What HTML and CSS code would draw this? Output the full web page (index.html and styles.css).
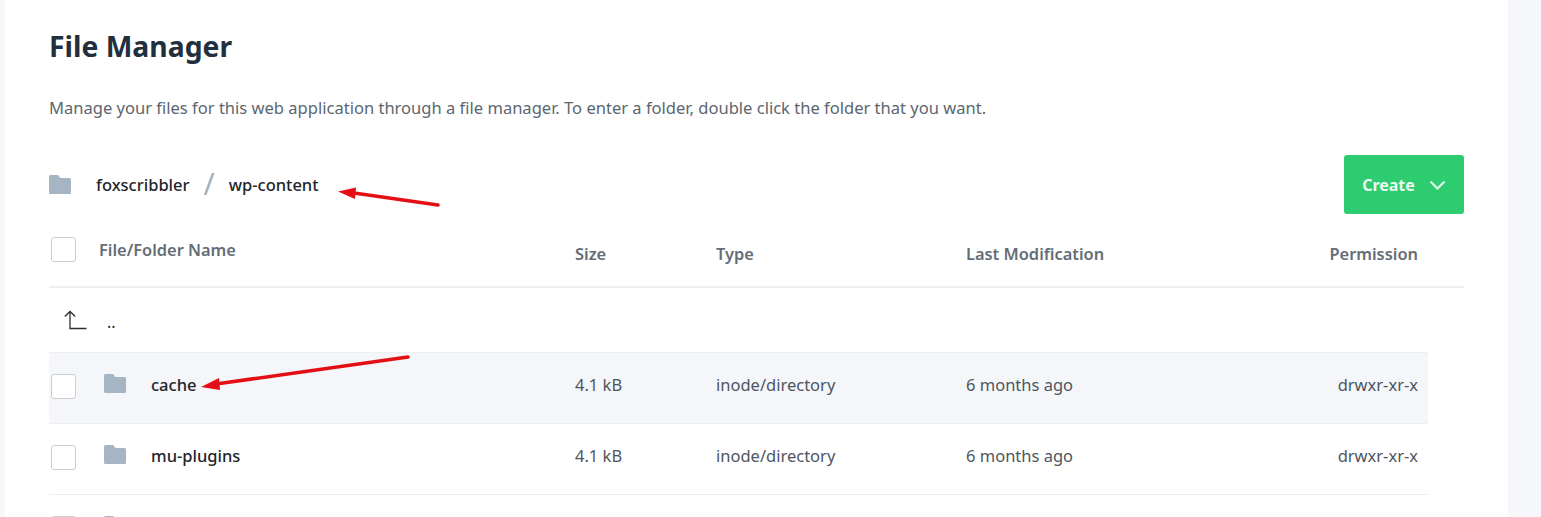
FILE: index.html
```html
<!DOCTYPE html>
<html lang="en">
<head>
    <meta charset="UTF-8">
    <title>File Manager</title>
    <link rel="stylesheet" href="styles.css">
</head>
<body>

<svg width="0" height="0" class="defs">
    <symbol id="folder" viewBox="0 0 22 19">
        <path d="M1.500 0H9l2.500 3H20.500a1.500 1.500 0 0 1 1.500 1.500V17.500a1.500 1.500 0 0 1-1.500 1.500H1.500A1.500 1.500 0 0 1 0 17.500V1.500A1.500 1.500 0 0 1 1.500 0z"/>
    </symbol>
</svg>

<div class="card">
    <h1>File Manager</h1>
    <p class="intro">Manage your files for this web application through a file manager. To enter a folder, double click the folder that you want.</p>

    <div class="toolbar">
        <div class="crumbs">
            <svg class="folder crumb-folder"><use href="#folder"/></svg>
            <span>foxscribbler</span>
            <span class="slash">/</span>
            <span>wp-content</span>
        </div>
        <button class="create">Create
            <svg width="17" height="10" viewBox="0 0 17 10"><path d="M1.500 1.500l7 7 7-7" fill="none" stroke="#d8f5e3" stroke-width="2.400"/></svg>
        </button>
    </div>

    <div class="head">
        <div class="head-name">
            <span class="check"></span>
            <span class="name-label">File/Folder Name</span>
        </div>
        <div class="grid-cols">
            <span>Size</span>
            <span>Type</span>
            <span>Last Modification</span>
            <span class="perm">Permission</span>
        </div>
    </div>

    <div class="up-row">
        <svg width="24" height="20" viewBox="0 0 24 20"><path d="M6 1.500V18.500H22.500M0.800 6.500L6 1.500l5.200 5" fill="none" stroke="#2a2f35" stroke-width="1.300"/></svg>
        <span>..</span>
    </div>

    <div class="row row-active">
        <div class="row-name">
            <span class="check"></span>
            <svg class="folder"><use href="#folder"/></svg>
            <span>cache</span>
        </div>
        <div class="grid-cols cells">
            <span>4.1 kB</span>
            <span>inode/directory</span>
            <span>6 months ago</span>
            <span class="perm">drwxr-xr-x</span>
        </div>
    </div>

    <div class="row">
        <div class="row-name">
            <span class="check"></span>
            <svg class="folder"><use href="#folder"/></svg>
            <span>mu-plugins</span>
        </div>
        <div class="grid-cols cells">
            <span>4.1 kB</span>
            <span>inode/directory</span>
            <span>6 months ago</span>
            <span class="perm">drwxr-xr-x</span>
        </div>
    </div>

    <div class="row">
        <div class="row-name">
            <span class="check"></span>
            <svg class="folder"><use href="#folder"/></svg>
        </div>
    </div>

    <!-- red arrows drawn over the screenshot -->
    <svg class="arrows" width="1541" height="517" viewBox="0 0 1541 517">
        <path d="M438 205L354 193" stroke="#e30f14" stroke-width="3.500" stroke-linecap="round"/>
        <path d="M338 191.500L356 187.500L355 199z" fill="#e30f14"/>
        <path d="M408 357L216 384" stroke="#e30f14" stroke-width="3.500" stroke-linecap="round"/>
        <path d="M201 387L219 378L220 390z" fill="#e30f14"/>
    </svg>
</div>

</body>
</html>
```

FILE: styles.css
```css
html, body {
    margin: 0;
    padding: 0;
    height: 517px;
    overflow: hidden;
}
body {
    font-family: 'Noto Sans', 'Open Sans', sans-serif;
    background-color: #f5f7fb;
    color: #1f252b;
}
.defs {
    position: absolute;
}
.card {
    margin-left: 5px;
    width: 1503px;
    height: 517px;
    box-sizing: border-box;
    padding: 26px 44px 0;
    background-color: #fff;
    overflow: hidden;
}
h1 {
    margin: 0;
    font-size: 28.3px;
    line-height: 40px;
    font-weight: 700;
    color: #22303e;
}
.intro {
    margin: 30px 0 0;
    font-size: 16.55px;
    line-height: 24px;
    color: #5c6670;
}
.toolbar {
    margin-top: 35px;
    height: 59px;
    display: flex;
    justify-content: space-between;
    align-items: center;
}
.crumbs {
    display: flex;
    align-items: center;
    font-size: 16.5px;
    font-weight: 500;
}
.slash {
    margin: 0 14px 2px;
    font-size: 30px;
    line-height: 30px;
    font-weight: 400;
    color: #a3b3c1;
}
.folder {
    width: 22px;
    height: 19px;
    fill: #a6b5c3;
    flex-shrink: 0;
}
.crumb-folder {
    margin-right: 25px;
}
.create {
    width: 120px;
    height: 59px;
    display: flex;
    align-items: center;
    justify-content: center;
    gap: 14px;
    border: none;
    border-radius: 3px;
    background-color: #2ecc71;
    color: #e8faef;
    font-family: inherit;
    font-size: 16px;
    font-weight: 700;
}
.head {
    margin-top: 11px;
    height: 61px;
    display: flex;
    border-bottom: 2px solid #eceef1;
    color: #646d76;
    font-size: 16.4px;
    font-weight: 600;
}
.head-name {
    width: 526px;
    display: flex;
    align-items: center;
    height: 48px;
}
.name-label {
    margin-left: 23px;
}
.check {
    margin-left: 2px;
    width: 25px;
    height: 25px;
    box-sizing: border-box;
    border: 1px solid #c9ced3;
    border-radius: 3px;
    background-color: #fff;
    flex-shrink: 0;
}
.grid-cols {
    display: grid;
    grid-template-columns: 141px 250px 1fr 200px;
    width: 843px;
    height: 24px;
    margin-top: 17px;
    line-height: 24px;
}
.perm {
    text-align: right;
}
.up-row {
    height: 64px;
    display: flex;
    align-items: center;
    padding-left: 15px;
    font-size: 16px;
}
.up-row span {
    margin-left: 19px;
    margin-top: 4px;
}
.row {
    width: 1379px;
    height: 49px;
    padding-top: 21px;
    display: flex;
    align-items: flex-start;
    border-bottom: 1px solid #eceef1;
    font-size: 16.5px;
}
.row-active {
    background-color: #f4f6fa;
    border-top: 1px solid #eceef1;
}
.row-name {
    width: 526px;
    display: flex;
    align-items: flex-start;
    line-height: 22px;
    font-weight: 500;
}
.row-name .folder {
    margin-left: 28px;
    margin-right: 25px;
}
.cells {
    margin-top: 0;
    line-height: 22px;
    color: #4d565f;
}
.arrows {
    position: absolute;
    left: 0;
    top: 0;
}
```
